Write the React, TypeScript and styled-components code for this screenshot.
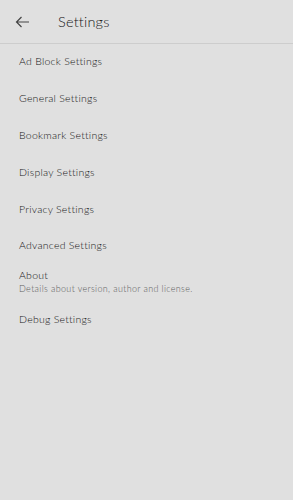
import React from "react";
import styled, { createGlobalStyle } from "styled-components";

const Global = createGlobalStyle`
  html, body { margin: 0; padding: 0; background: #e0e0e0; }
  body { font-family: "Lato", "Liberation Sans", sans-serif; }
`;

const Page = styled.div`
  width: 293px;
  height: 500px;
  background: #e0e0e0;
  display: flex;
  flex-direction: column;
`;

const Header = styled.header`
  display: flex;
  align-items: center;
  border-bottom: 1px solid #cdcdcd;
  box-sizing: border-box;
  height: 44px;
  padding-left: 14px;
`;

const BackButton = styled.button`
  width: 16px;
  height: 16px;
  padding: 0;
  border: none;
  background: none;
  display: flex;
  align-items: center;
  justify-content: center;
  color: #444;
`;

const Title = styled.h1`
  margin: 0 0 0 28px;
  font-size: 14.5px;
  font-weight: 300;
  color: #151515;
  letter-spacing: 0.2px;
`;

const List = styled.ul`
  list-style: none;
  margin: -1px 0 0;
  padding: 0;
`;

const Item = styled.li`
  height: 36.8px;
  padding-left: 19px;
  display: flex;
  flex-direction: column;
  justify-content: center;
`;

const ItemTitle = styled.span`
  font-size: 10.5px;
  font-weight: 300;
  color: #151515;
  letter-spacing: 0.25px;
  line-height: 12px;
`;

const ItemSub = styled.span`
  font-size: 9px;
  font-weight: 300;
  color: #5e5e5e;
  letter-spacing: 0.35px;
  line-height: 12px;
  margin-top: 2px;
`;

const items: { title: string; sub?: string }[] = [
  { title: "Ad Block Settings" },
  { title: "General Settings" },
  { title: "Bookmark Settings" },
  { title: "Display Settings" },
  { title: "Privacy Settings" },
  { title: "Advanced Settings" },
  { title: "About", sub: "Details about version, author and license." },
  { title: "Debug Settings" },
];

export default function App() {
  return (
    <Page>
      <Global />
      <Header>
        <BackButton aria-label="Back">
          <svg width="15" height="12" viewBox="0 0 15 12" fill="none" stroke="#444" strokeWidth="1.2">
            <path d="M14 6H1.5M6.5 1L1.5 6L6.5 11" />
          </svg>
        </BackButton>
        <Title>Settings</Title>
      </Header>
      <List>
        {items.map((it) => (
          <Item key={it.title}>
            <ItemTitle>{it.title}</ItemTitle>
            {it.sub && <ItemSub>{it.sub}</ItemSub>}
          </Item>
        ))}
      </List>
    </Page>
  );
}
